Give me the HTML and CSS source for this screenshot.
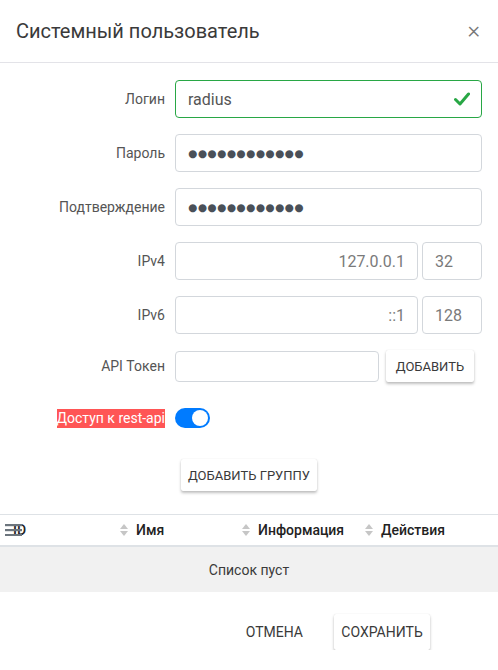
FILE: index.html
```html
<!DOCTYPE html>
<html lang="ru">
<head>
    <meta charset="UTF-8">
    <meta name="viewport" content="width=device-width, initial-scale=1.0">
    <title>Системный пользователь</title>
    <link rel="stylesheet" href="styles.css">
</head>
<body>

    <div class="modal">
        <div class="modal-header">
            <h5 class="modal-title">Системный пользователь</h5>
            <button class="close">&times;</button>
        </div>

        <div class="modal-body">
            <div class="form-row">
                <label class="form-label">Логин</label>
                <div class="field valid">
                    <input type="text" value="radius">
                    <svg class="check" width="16" height="14" viewBox="0 0 16 14">
                        <path d="M1.5 7.5 L6 12 L14.5 2" fill="none" stroke="#28a745" stroke-width="3" stroke-linecap="round" stroke-linejoin="round"/>
                    </svg>
                </div>
            </div>

            <div class="form-row">
                <label class="form-label">Пароль</label>
                <div class="field">
                    <input type="text" class="secret" value="●●●●●●●●●●●●">
                </div>
            </div>

            <div class="form-row">
                <label class="form-label">Подтверждение</label>
                <div class="field">
                    <input type="text" class="secret" value="●●●●●●●●●●●●">
                </div>
            </div>

            <div class="form-row">
                <label class="form-label">IPv4</label>
                <div class="field split">
                    <input type="text" class="addr" value="127.0.0.1">
                    <input type="text" class="mask" value="32">
                </div>
            </div>

            <div class="form-row">
                <label class="form-label">IPv6</label>
                <div class="field split">
                    <input type="text" class="addr" value="::1">
                    <input type="text" class="mask" value="128">
                </div>
            </div>

            <div class="form-row">
                <label class="form-label">API Токен</label>
                <div class="field token">
                    <input type="text" class="token-input" value="">
                    <button class="btn-raised btn-small">Добавить</button>
                </div>
            </div>

            <div class="form-row switch-row">
                <label class="form-label"><span class="warn">Доступ к rest-api</span></label>
                <div class="field">
                    <span class="switch"><span class="knob"></span></span>
                </div>
            </div>

            <div class="group-add">
                <button class="btn-raised">Добавить группу</button>
            </div>
        </div>

        <div class="table">
            <div class="thead">
                <div class="th th-id">
                    <svg class="cols-icon" width="17" height="12" viewBox="0 0 17 12">
                        <rect x="0" y="0" width="17" height="2.2" fill="#6c757d"/>
                        <rect x="0" y="5" width="17" height="2.2" fill="#6c757d"/>
                        <rect x="0" y="10" width="17" height="2" fill="#6c757d"/>
                    </svg>
                    <span>ID</span>
                </div>
                <div class="th"><span class="sort"></span>Имя</div>
                <div class="th"><span class="sort"></span>Информация</div>
                <div class="th"><span class="sort"></span>Действия</div>
            </div>
            <div class="empty">Список пуст</div>
        </div>

        <div class="modal-footer">
            <button class="btn-flat">Отмена</button>
            <button class="btn-raised btn-save">Сохранить</button>
        </div>
    </div>

</body>
</html>
```

FILE: styles.css
```css
/* общие */
body {
    margin: 0;
    font-family: Roboto, "Noto Sans", sans-serif;
    color: #212529;
    background: #fff;
}

.modal {
    width: 498px;
    background: #fff;
}

/* шапка */
.modal-header {
    display: flex;
    align-items: center;
    justify-content: space-between;
    padding: 16px;
    border-bottom: 1px solid #e3e3e8;
}

.modal-title {
    margin: 0;
    font-size: 20px;
    font-weight: 400;
    line-height: 30px;
    color: #3a3a3a;
}

.close {
    border: none;
    background: none;
    padding: 0 2px 2px;
    font-family: Roboto, sans-serif;
    font-size: 24px;
    line-height: 24px;
    font-weight: 300;
    color: #777;
    cursor: pointer;
}

/* форма */
.modal-body {
    padding: 17px 16px 0;
}

.form-row {
    display: flex;
    align-items: center;
    margin-bottom: 16px;
}

.form-label {
    width: 149px;
    padding-right: 10px;
    text-align: right;
    font-size: 14px;
    color: #555;
}

.field {
    flex: 1;
    display: flex;
    align-items: center;
    position: relative;
}

input {
    box-sizing: border-box;
    width: 100%;
    height: 38px;
    padding: 6px 12px;
    border: 1px solid #d3d7dc;
    border-radius: 4px;
    font-family: Roboto, sans-serif;
    font-size: 16px;
    color: #555;
    outline: none;
}

.secret {
    font-family: "DejaVu Sans", sans-serif;
    font-size: 10.5px;
    letter-spacing: 0.5px;
    color: #4a5058;
}

.valid input {
    border-color: #28a745;
    padding-right: 40px;
}

.check {
    position: absolute;
    right: 12px;
    top: 12px;
}

.split {
    gap: 4px;
}

.split .addr {
    flex: 1;
    text-align: right;
    color: #7a7a7a;
}

.split .mask {
    width: 60px;
    flex: none;
    color: #7a7a7a;
}

.token {
    gap: 7px;
}

.token-input {
    width: 204px;
    height: 31px;
    flex: none;
}

.switch-row {
    margin-top: 26px;
}

.warn {
    background: #ff5555;
    color: #fff;
    font-size: 14px;
    padding: 1px 0 2px;
}

.switch {
    display: inline-block;
    position: relative;
    width: 35px;
    height: 20px;
    border-radius: 10px;
    background: #007bff;
}

.switch .knob {
    position: absolute;
    right: 2px;
    top: 2px;
    width: 16px;
    height: 16px;
    border-radius: 50%;
    background: #fff;
}

/* кнопки */
.btn-raised {
    height: 32px;
    padding: 0 9px;
    border: none;
    border-radius: 2px;
    background: #fff;
    box-shadow: 0 2px 3px rgba(0,0,0,0.25), 0 0 1px rgba(0,0,0,0.15);
    font-family: Roboto, sans-serif;
    font-size: 13px;
    text-transform: uppercase;
    color: #3a3a3a;
    cursor: pointer;
}

.btn-small {
    width: 88px;
    padding: 0;
}

.group-add {
    display: flex;
    justify-content: center;
    margin-top: 31px;
    padding-bottom: 23px;
}

.group-add .btn-raised {
    width: 136px;
    padding: 0;
}

/* таблица */
.table {
    border-top: 1px solid #dee2e6;
}

.thead {
    display: grid;
    grid-template-columns: 112px 122px 123px 1fr;
    height: 30px;
    border-bottom: 2px solid #dee2e6;
}

.th {
    display: flex;
    align-items: center;
    padding-left: 8px;
    font-size: 14px;
    font-weight: 500;
    color: #222;
}

.th-id {
    position: relative;
    padding-left: 13px;
}

.cols-icon {
    position: absolute;
    left: 5px;
    top: 9px;
}

.sort {
    width: 8px;
    height: 12px;
    margin-right: 8px;
    position: relative;
}

.sort::before,
.sort::after {
    content: "";
    position: absolute;
    left: 0;
    border-left: 4px solid transparent;
    border-right: 4px solid transparent;
}

.sort::before {
    top: 0;
    border-bottom: 5px solid #c6c6c6;
}

.sort::after {
    bottom: 0;
    border-top: 5px solid #c6c6c6;
}

.empty {
    height: 45px;
    line-height: 46px;
    text-align: center;
    background: #f1f1f1;
    font-size: 14px;
    color: #3a3a3a;
}

/* подвал */
.modal-footer {
    display: flex;
    justify-content: flex-end;
    align-items: center;
    gap: 15px;
    padding: 22px 68px 0 0;
}

.btn-flat {
    height: 36px;
    padding: 0 16px;
    border: none;
    background: none;
    font-family: Roboto, sans-serif;
    font-size: 14px;
    text-transform: uppercase;
    color: #3a3a3a;
}

.btn-save {
    height: 36px;
    width: 96px;
    padding: 0;
    font-size: 14px;
}
```
